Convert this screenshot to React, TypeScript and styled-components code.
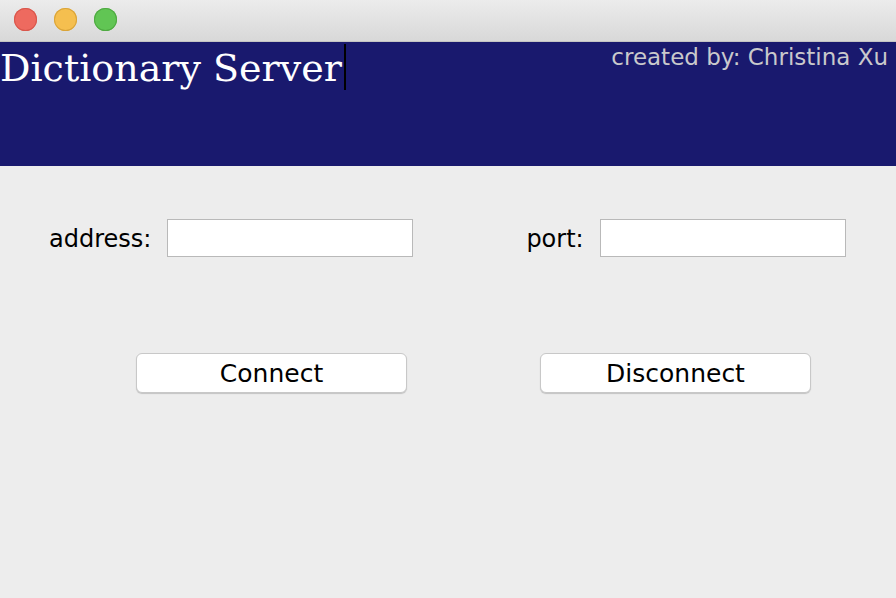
import React from "react";
import styled, { createGlobalStyle } from "styled-components";

const Global = createGlobalStyle`
  html, body { margin: 0; padding: 0; background: #ececec; }
  #root { width: 896px; height: 598px; }
`;

const Window = styled.div`
  width: 896px;
  height: 598px;
  display: flex;
  flex-direction: column;
  background: #ededed;
  overflow: hidden;
  font-family: "DejaVu Sans", "Liberation Sans", sans-serif;
`;

const TitleBar = styled.div`
  height: 42px;
  flex: none;
  display: flex;
  align-items: center;
  gap: 17px;
  padding-left: 14px;
  box-sizing: border-box;
  background: linear-gradient(#ececec, #d8d8d8);
  border-bottom: 1px solid #c4c4c4;
`;

const Light = styled.span<{ $fill: string; $edge: string }>`
  width: 23px;
  height: 23px;
  border-radius: 50%;
  background: ${(p) => p.$fill};
  box-shadow: inset 0 0 0 1px ${(p) => p.$edge};
  margin-top: -2px;
`;

const Header = styled.div`
  height: 124px;
  flex: none;
  background: #19196e;
  display: flex;
  justify-content: space-between;
  align-items: flex-start;
`;

const Title = styled.div`
  display: flex;
  align-items: flex-start;
  color: #ffffff;
  font-family: "DejaVu Serif", "Liberation Serif", serif;
  font-size: 38px;
  line-height: 1;
  padding-top: 7px;
`;

const Caret = styled.span`
  width: 2px;
  height: 46px;
  background: #000;
  margin-top: -5px;
  margin-left: 2px;
`;

const Credit = styled.div`
  color: #c9c9cc;
  font-size: 23px;
  line-height: 1;
  padding-top: 4px;
  padding-right: 8px;
`;

const Content = styled.div`
  flex: 1;
  display: flex;
  flex-direction: column;
  padding-top: 53px;
`;

const FormRow = styled.div`
  display: flex;
  align-items: center;
  padding-left: 49px;
  gap: 113px;
`;

const Field = styled.label`
  display: flex;
  align-items: center;
  gap: 15px;
  font-size: 24px;
  line-height: 1;
  padding-top: 2px;
  color: #000;
`;

const Input = styled.input`
  width: 246px;
  height: 38px;
  box-sizing: border-box;
  border: 1px solid #b9b9b9;
  background: #fff;
  outline: none;
  margin: -2px 0 0 1px;
  font-size: 20px;
`;

const ButtonRow = styled.div`
  display: flex;
  padding-left: 136px;
  gap: 133px;
  margin-top: 96px;
`;

const Button = styled.button`
  width: 271px;
  height: 40px;
  box-sizing: border-box;
  background: #fff;
  border: 1px solid #c8c8c8;
  border-radius: 6px;
  box-shadow: 0 1px 1px rgba(0, 0, 0, 0.18);
  font-family: "DejaVu Sans", "Liberation Sans", sans-serif;
  font-size: 25px;
  color: #000;
  padding: 0;
`;

export default function App() {
  return (
    <>
      <Global />
      <Window>
        <TitleBar>
          <Light $fill="#ee6a5f" $edge="#d8574c" />
          <Light $fill="#f5bf4f" $edge="#d9a43a" />
          <Light $fill="#61c554" $edge="#4fa942" />
        </TitleBar>
        <Header>
          <Title>
            Dictionary Server
            <Caret />
          </Title>
          <Credit>created by: Christina Xu</Credit>
        </Header>
        <Content>
          <FormRow>
            <Field>
              address:
              <Input />
            </Field>
            <Field>
              port:
              <Input />
            </Field>
          </FormRow>
          <ButtonRow>
            <Button>Connect</Button>
            <Button>Disconnect</Button>
          </ButtonRow>
        </Content>
      </Window>
    </>
  );
}
